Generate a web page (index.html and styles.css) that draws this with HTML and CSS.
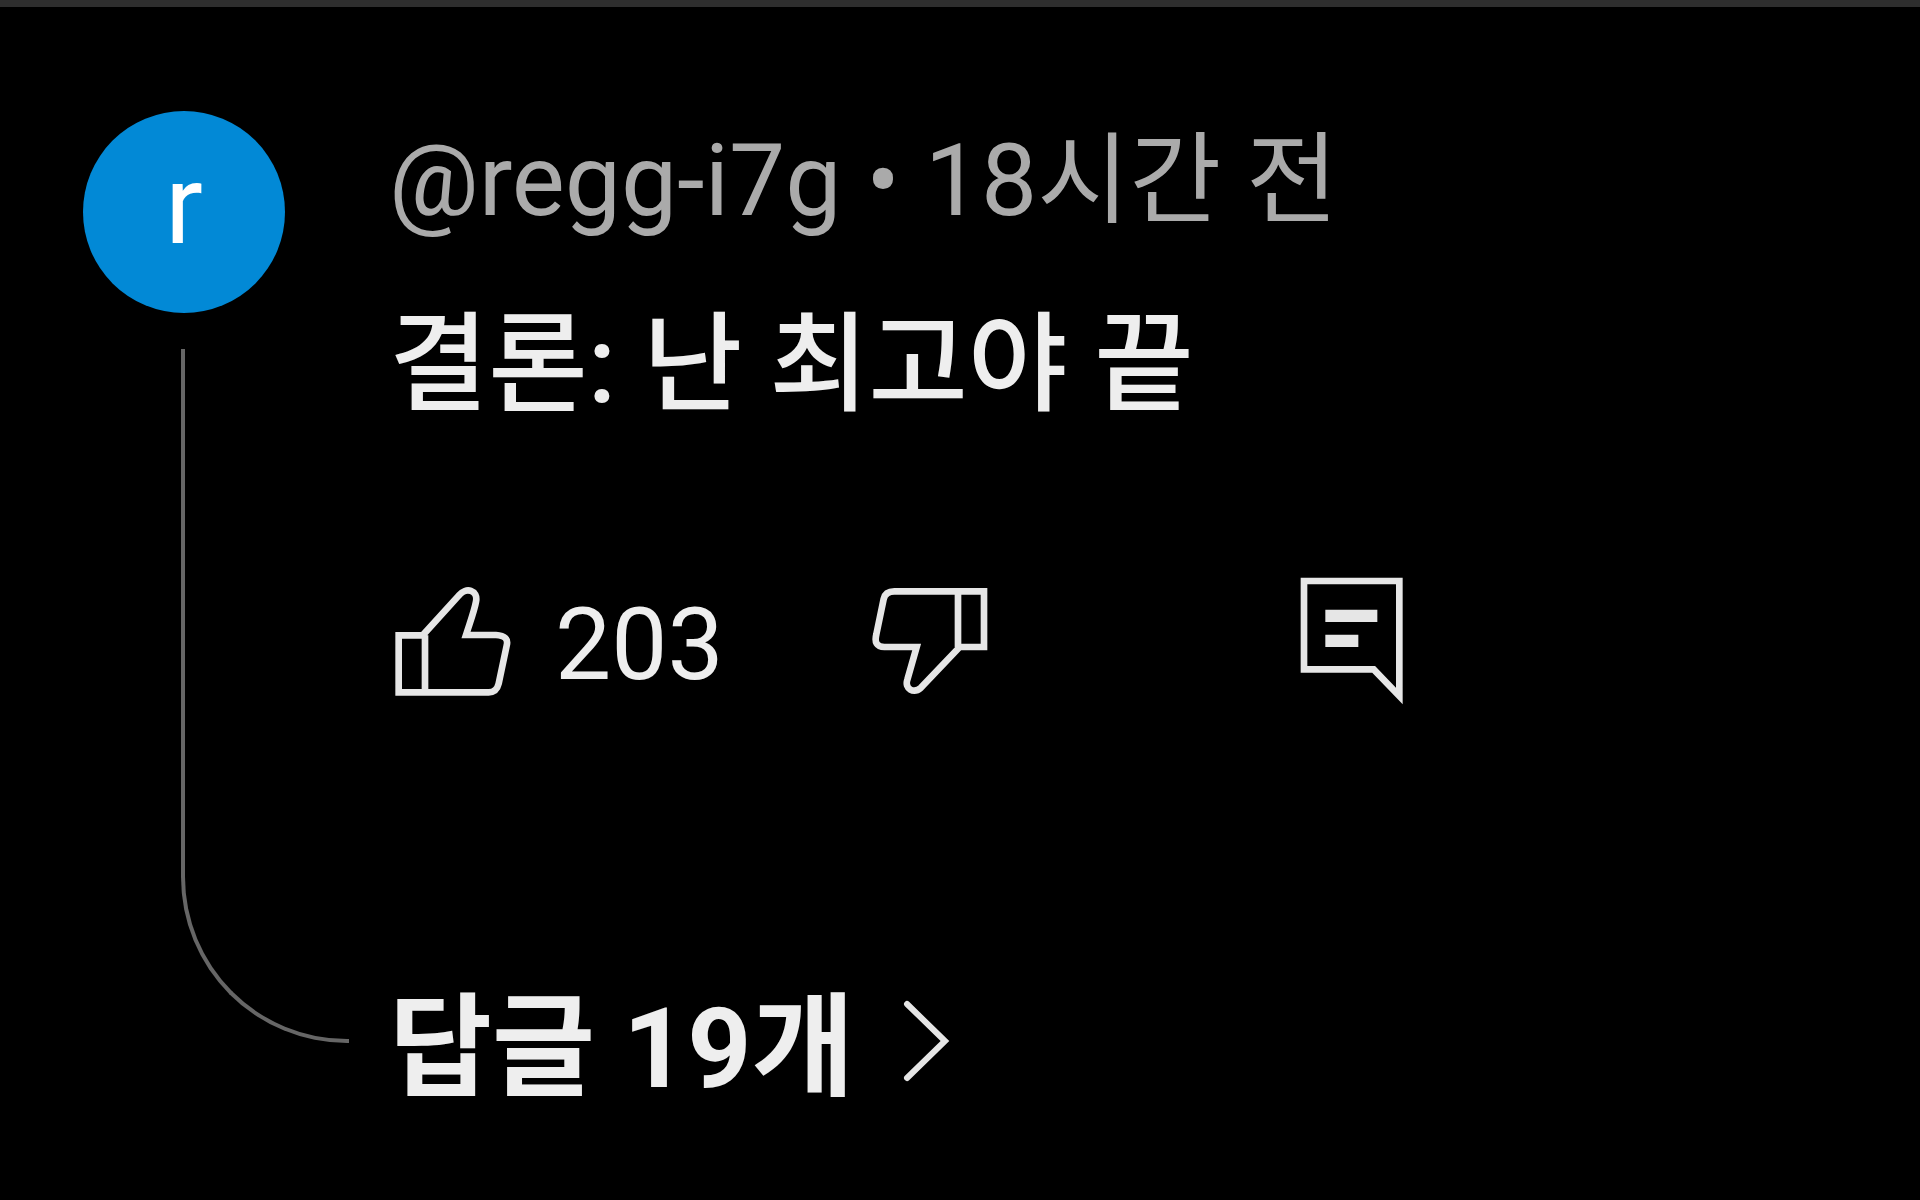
FILE: index.html
```
<!DOCTYPE html>
<html lang="ko">
<head>
  <meta charset="UTF-8" />
  <meta name="viewport" content="width=device-width, initial-scale=1.0"/>
  <title>댓글</title>
  <link rel="stylesheet" href="styles.css">
</head>
<body>

  <article class="comment">
    <div class="side">
      <div class="avatar">r</div>
      <div class="thread"></div>
    </div>

    <div class="content">
      <div class="meta">@regg-i7g • 18시간 전</div>
      <p class="text">결론: 난 최고야 끝</p>

      <div class="actions">
        <button type="button" class="like">
          <svg width="122" height="110" viewBox="59 75 366 330" aria-hidden="true">
            <path d="M88 223H160L268 104C290 76 327 88 320 122C315 150 302 184 290 222H380Q420 224 412 254L388 368Q382 394 358 394H88ZM167 223V394"/>
          </svg>
          <span>203</span>
        </button>
        <button type="button" class="dislike" aria-label="싫어요">
          <svg width="116" height="110" viewBox="65 81 348 330" aria-hidden="true">
            <path d="M401 97H132Q105 97 100 120L78 226C72 250 79 264 102 264H199L171 362C162 390 190 405 212 386L328 264H401ZM323 97V264"/>
          </svg>
        </button>
        <button type="button" class="reply" aria-label="답글 달기">
          <svg width="104" height="128" viewBox="89 81 312 384" aria-hidden="true">
            <path d="M101 93H387V438L310 358H101Z"/>
            <path class="fill" d="M165 179H321V216H165ZM165 254H264V291H165Z"/>
          </svg>
        </button>
      </div>

      <button type="button" class="replies">
        <span>답글 19개</span>
        <svg width="48" height="84" viewBox="0 0 48 84" aria-hidden="true">
          <path d="M5 5L43 42L5 79"/>
        </svg>
      </button>
    </div>
  </article>

</body>
</html>
```
FILE: styles.css
```
body {
  margin: 0;
  background: #000;
  color: #eee;
  font-family: Roboto, "Noto Sans CJK KR", sans-serif;
  font-size: 100px;
  line-height: 140px;
}

.comment {
  display: flex;
  gap: 40px;
  padding: 104px 83px 64px;
  border-top: 7px solid #2e2e2e;
}

.side {
  display: flex;
  flex-direction: column;
  flex: none;
  width: 266px;
}

.avatar {
  width: 202px;
  height: 202px;
  border-radius: 50%;
  background: #0289d6;
  color: #fff;
  font-size: 112px;
  line-height: 188px;
  text-align: center;
}

.thread {
  flex: 1;
  margin: 36px 0 76px 98px;
  border: solid #666;
  border-width: 0 0 4px 4px;
  border-bottom-left-radius: 166px;
}

.content {
  flex: 1;
}

.meta {
  color: #aaa;
}

.text {
  margin: 44px 0 132px;
  font-size: 108px;
  font-weight: 500;
}

button {
  display: flex;
  align-items: center;
  padding: 0;
  border: none;
  background: none;
  color: inherit;
  font: inherit;
  cursor: pointer;
}

svg {
  fill: none;
  stroke: #e6e6e6;
  stroke-width: 20;
}

.actions {
  display: flex;
  align-items: center;
  margin-bottom: 248px;
}

.like {
  gap: 44px;
}

.like span {
  padding-top: 8px;
}

.dislike {
  margin-left: 148px;
}

.reply {
  margin-left: 312px;
}

.fill {
  fill: #e6e6e6;
  stroke: none;
}

.replies {
  gap: 48px;
  font-size: 112px;
  font-weight: 700;
}

.replies span {
  padding-top: 16px;
}

.replies svg {
  stroke-width: 6;
  stroke-linecap: round;
}
```
